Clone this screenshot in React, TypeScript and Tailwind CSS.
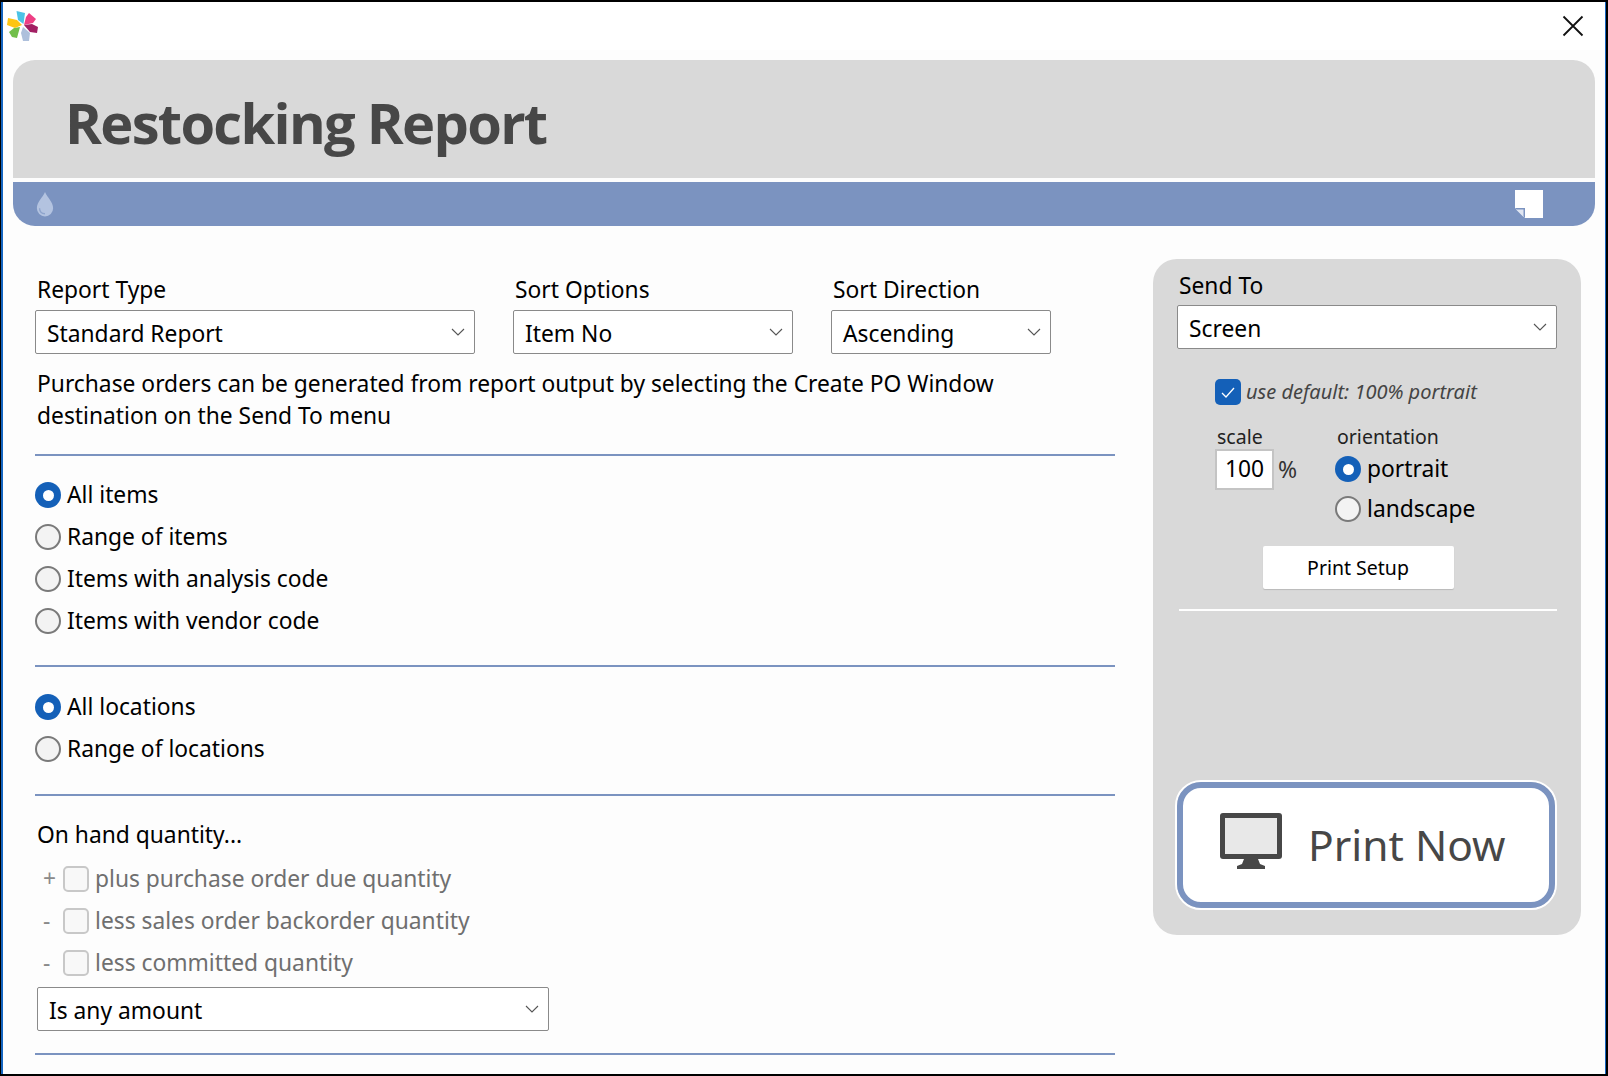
import React from "react";

const FONT = "font-['Noto_Sans','Open_Sans',sans-serif]";

function Chevron() {
    return (
        <svg width="14" height="8" viewBox="0 0 14 8" className="shrink-0" fill="none">
            <path d="M1 1l6 6 6-6" stroke="#555" strokeWidth="1.1" />
        </svg>
    );
}

function Select({ value, className }: { value: string; className: string }) {
    return (
        <div className={`flex items-center justify-between h-[44px] bg-white border border-[#8a8a8a] rounded-[2px] pl-[11px] pr-[9px] text-[22.8px] text-black ${className}`}>
            <span className="pt-[4px]">{value}</span>
            <Chevron />
        </div>
    );
}

function Radio({ checked }: { checked?: boolean }) {
    if (checked) {
        return (
            <span className="flex items-center justify-center shrink-0 w-[26px] h-[26px] rounded-full bg-[#1460b8]">
                <span className="w-[11px] h-[11px] rounded-full bg-white" />
            </span>
        );
    }
    return <span className="block shrink-0 w-[26px] h-[26px] rounded-full bg-[#f3f3f3] border-2 border-[#7a7a7a]" />;
}

function RadioRow({ label, checked }: { label: string; checked?: boolean }) {
    return (
        <div className="flex items-center gap-[6px] h-[42px] text-[22.8px] text-black">
            <Radio checked={checked} />
            <span>{label}</span>
        </div>
    );
}

function DisabledCheck({ sign, label }: { sign: string; label: string }) {
    return (
        <div className="flex items-center h-[42px] text-[22.8px] text-[#6f6f6f]">
            <span className="w-[28px] pl-[8px] text-[#8a8a8a]">{sign}</span>
            <span className="block shrink-0 w-[26px] h-[26px] rounded-[5px] bg-[#f8f8f8] border-2 border-[#c8c8c8] mr-[6px]" />
            <span>{label}</span>
        </div>
    );
}

function Logo() {
    return (
        <svg width="34" height="36" viewBox="6 8 34 36">
            <polygon points="16.5,11 25,13 23.5,24 18,20" fill="#4cc3e6" />
            <polygon points="29,13 36,19 33,23 24,25 26,17" fill="#ee3f84" />
            <polygon points="24,25 32,24 38,27 37,33 30,32" fill="#a21f63" />
            <polygon points="23,27 30,33 29,41 23,41 21,33" fill="#aec0dc" />
            <polygon points="20,27 17,38 12,37 9,32 14,28" fill="#72bf4b" />
            <polygon points="22,25 15,28 7,25 8,18 17,20" fill="#fdc513" />
        </svg>
    );
}

function Drop() {
    return (
        <svg width="18" height="26" viewBox="0 0 16 24">
            <path d="M8 1c2 5 7.500 9 7.500 15a7.500 7.500 0 0 1-15 0C.5 10 6 6 8 1z" fill="#b3c3e0" />
            <path d="M3 16c0 3 2 5 5 5" fill="none" stroke="#8ea4cc" strokeWidth="1.200" />
        </svg>
    );
}

function NoteIcon() {
    return (
        <svg width="28" height="28" viewBox="0 0 28 28">
            <path d="M0 0h28v28H10L0 18z" fill="#fff" />
            <path d="M0 18h10v10z" fill="#7b93c0" />
            <path d="M1 19.500h7.500V27z" fill="#dfe5f1" />
        </svg>
    );
}

function Monitor() {
    return (
        <svg width="62" height="56" viewBox="0 0 62 56" className="mb-[8px]">
            <rect x="0" y="0" width="62" height="46" rx="3" fill="#474747" />
            <rect x="5" y="5" width="52" height="36" fill="#e8e8e8" />
            <path d="M24 46h14l2 5 5 2v3H17v-3l5-2z" fill="#474747" />
        </svg>
    );
}

export default function App() {
    return (
        <div className="w-[1608px] h-[1076px] overflow-hidden border-t-2 border-b-2 border-r-2 border-l border-black">
            <div className={`h-full flex flex-col overflow-hidden bg-[#fdfdfd] border-l-2 border-r border-[#1565c0] ${FONT}`}>
                {/* Title bar */}
                <div className="h-[48px] shrink-0 bg-white flex items-center justify-between pl-[3px] pr-[21px]">
                    <Logo />
                    <svg width="22" height="22" viewBox="0 0 22 22" fill="none">
                        <path d="M1.500 1.500l19 19M20.500 1.500l-19 19" stroke="#111" strokeWidth="1.800" />
                    </svg>
                </div>

                {/* Header */}
                <div className="mt-[10px] mx-[10px] shrink-0">
                    <div className="h-[118px] bg-[#d9d9d9] rounded-t-[22px] pl-[52px] pt-[26px]">
                        <h1 className="font-['Open_Sans',sans-serif] font-bold text-[56px] leading-[72px] text-[#474747] tracking-[-1.7px]">Restocking Report</h1>
                    </div>
                    <div className="h-[44px] mt-[4px] bg-[#7b93c0] rounded-b-[22px] flex items-center justify-between pl-[23px] pr-[52px]">
                        <Drop />
                        <NoteIcon />
                    </div>
                </div>

                {/* Body */}
                <div className="flex-1 flex items-start">
                    <div className="w-[1150px] shrink-0 pl-[32px] pr-[38px] pt-[46px]">
                        <div className="flex">
                            <div className="w-[440px] mr-[38px]">
                                <div className="pl-[2px] pt-[1px] h-[38px] text-[22.8px] text-black">Report Type</div>
                                <Select value="Standard Report" className="w-[440px]" />
                            </div>
                            <div className="w-[280px] mr-[38px]">
                                <div className="pl-[2px] pt-[1px] h-[38px] text-[22.8px] text-black">Sort Options</div>
                                <Select value="Item No" className="w-[280px]" />
                            </div>
                            <div className="w-[220px]">
                                <div className="pl-[2px] pt-[1px] h-[38px] text-[22.8px] text-black">Sort Direction</div>
                                <Select value="Ascending" className="w-[220px]" />
                            </div>
                        </div>
                        <p className="mt-[14px] pl-[2px] w-[1000px] text-[22.8px] leading-[32px] text-black">
                            Purchase orders can be generated from report output by selecting the Create PO Window destination on the Send To menu
                        </p>
                        <div className="mt-[22px] h-[2px] bg-[#7b93c0]" />
                        <div className="mt-[18px]">
                            <RadioRow label="All items" checked />
                            <RadioRow label="Range of items" />
                            <RadioRow label="Items with analysis code" />
                            <RadioRow label="Items with vendor code" />
                        </div>
                        <div className="mt-[23px] h-[2px] bg-[#7b93c0]" />
                        <div className="mt-[19px]">
                            <RadioRow label="All locations" checked />
                            <RadioRow label="Range of locations" />
                        </div>
                        <div className="mt-[24px] h-[2px] bg-[#7b93c0]" />
                        <div className="mt-[22px] pl-[2px] h-[36px] text-[22.8px] text-black">On hand quantity...</div>
                        <div className="mt-[4px]">
                            <DisabledCheck sign="+" label="plus purchase order due quantity" />
                            <DisabledCheck sign="-" label="less sales order backorder quantity" />
                            <DisabledCheck sign="-" label="less committed quantity" />
                        </div>
                        <Select value="Is any amount" className="w-[512px] ml-[2px] mt-[3px]" />
                        <div className="mt-[22px] h-[2px] bg-[#7b93c0]" />
                    </div>

                    {/* Send To panel */}
                    <div className="mt-[33px] w-[428px] h-[676px] bg-[#d9d9d9] rounded-[24px] flex flex-col pl-[24px] pr-[24px] pt-[10px]">
                        <div className="pl-[2px] h-[36px] text-[22.8px] text-black">Send To</div>
                        <Select value="Screen" className="w-[380px]" />
                        <div className="mt-[28px] ml-[38px] flex items-center gap-[5px]">
                            <span className="flex items-center justify-center w-[26px] h-[26px] rounded-[5px] bg-[#1460b8]">
                                <svg width="14" height="11" viewBox="0 0 14 11" fill="none">
                                    <path d="M1 6l4 4 8-9" stroke="#fff" strokeWidth="1.300" />
                                </svg>
                            </span>
                            <span className="italic text-[20px] text-[#444]">use default: 100% portrait</span>
                        </div>
                        <div className="mt-[16px] ml-[38px] flex">
                            <div className="w-[120px]">
                                <div className="pl-[2px] text-[19.5px] leading-[28px] text-[#222]">scale</div>
                                <div className="flex items-center gap-[4px] mt-[-2px]">
                                    <span className="flex items-center justify-center w-[59px] h-[41px] bg-white border-2 border-[#c4c4c4] text-[22.8px] text-black">100</span>
                                    <span className="text-[23px] text-[#333]">%</span>
                                </div>
                            </div>
                            <div>
                                <div className="pl-[2px] text-[19.5px] leading-[28px] text-[#222]">orientation</div>
                                <div className="mt-[-2px]">
                                    <div className="flex items-center gap-[6px] h-[40px] text-[22.8px] text-black"><Radio checked /><span>portrait</span></div>
                                    <div className="flex items-center gap-[6px] h-[40px] text-[22.8px] text-black"><Radio /><span>landscape</span></div>
                                </div>
                            </div>
                        </div>
                        <div className="self-center mt-[17px] ml-[-18px] w-[191px] h-[43px] bg-white rounded-[2px] shadow-[0_1px_1px_rgba(0,0,0,0.15)] flex items-center justify-center text-[19.5px] text-black">Print Setup</div>
                        <div className="mt-[20px] ml-[2px] h-[2px] bg-white" />
                        <div className="mt-[169px] ml-[-2px] h-[130px] rounded-[26px] border-[2px] border-white">
                            <div className="h-full rounded-[24px] border-[6px] border-[#7b93c0] bg-white flex items-center pl-[37px]">
                                <Monitor />
                                <span className="ml-[26px] text-[42.5px] text-[#474747]">Print Now</span>
                            </div>
                        </div>
                    </div>
                </div>
            </div>
        </div>
    );
}
